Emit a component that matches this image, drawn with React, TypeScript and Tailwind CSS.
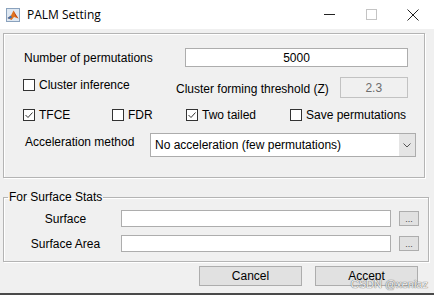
import React from 'react';

function CheckBox({ checked, label, className = '' }: { checked?: boolean; label: string; className?: string }) {
  return (
    <div className={`flex items-center ${className}`}>
      <div className="w-[12px] h-[12px] bg-white border border-[#333333] flex items-center justify-center shrink-0">
        {checked && (
          <svg width="10" height="10" viewBox="0 0 10 10">
            <polyline points="1.5,5 4,7.5 8.5,2.5" fill="none" stroke="#333" strokeWidth="1" />
          </svg>
        )}
      </div>
      <span className="ml-[4px] leading-none">{label}</span>
    </div>
  );
}

function MatlabIcon() {
  return (
    <svg width="14" height="14" viewBox="0 0 14 14">
      <rect x="0.5" y="0.5" width="13" height="13" fill="#dfe8f2" stroke="#8aa2bd" />
      <path d="M1.5 10 L5 7.5 L7.5 2.5 L10 7 L12.5 10.5 L8 9 L5.5 12 Z" fill="#e0731e" />
      <path d="M1.5 10 L5 7.5 L6 9.5 L3 11 Z" fill="#3d6fb0" />
      <path d="M7.5 2.5 L10 7 L12.5 10.5 L9.5 8 Z" fill="#b83a13" />
    </svg>
  );
}

function SmallButton() {
  return (
    <div className="w-[20px] h-[15px] bg-[#e1e1e1] border border-[#adadad] flex items-end justify-center text-[9px] leading-[11px] text-[#444]">
      ...
    </div>
  );
}

export default function App() {
  return (
    <div
      className="w-[434px] h-[295px] bg-[#f0f0f0] relative overflow-hidden text-[12px] text-black"
      style={{ fontFamily: '"Liberation Sans", Arial, sans-serif' }}
    >
      {/* title bar */}
      <div className="h-[29px] bg-white flex items-center relative">
        <div className="ml-[6px]">
          <MatlabIcon />
        </div>
        <span className="ml-[7px] text-[12px]" style={{ fontFamily: '"Open Sans", "Noto Sans", sans-serif' }}>
          PALM Setting
        </span>
        <div className="ml-auto flex items-center h-full">
          <div className="w-[46px] h-full flex items-center justify-center">
            <div className="w-[11px] h-px bg-[#222]" />
          </div>
          <div className="w-[46px] h-full flex items-center justify-center ml-[-4px]">
            <div className="w-[11px] h-[11px] border border-[#c4c4c4]" />
          </div>
          <div className="w-[46px] h-full flex items-center justify-center ml-[-4px] mr-[-2px]">
            <svg width="12" height="12" viewBox="0 0 12 12">
              <path d="M0.5 0.5 L11.5 11.5 M11.5 0.5 L0.5 11.5" stroke="#222" strokeWidth="1" />
            </svg>
          </div>
        </div>
      </div>

      {/* main panel */}
      <div className="mt-[4px] ml-[3px] w-[422px] h-[145px] border border-[#b4b4b4] shadow-[inset_1px_1px_0_#ffffff,1px_1px_0_#ffffff] pt-[14px]">
        <div className="flex items-center h-[19px]">
          <span className="ml-[20px] w-[161px]">Number of permutations</span>
          <div className="w-[223px] h-[19px] bg-white border border-[#adadad] flex items-center justify-center">5000</div>
        </div>

        <div className="flex items-center h-[21px] mt-[10px]">
          <CheckBox label="Cluster inference" className="ml-[19px] w-[153px] mt-[-5px]" />
          <span className="mt-[3px]">Cluster forming threshold (Z)</span>
          <div className="ml-[11px] w-[68px] h-[21px] border border-[#c2c2c2] flex items-center justify-center text-[#6d6d6d]">
            2.3
          </div>
        </div>

        <div className="flex items-center h-[12px] mt-[11px]">
          <CheckBox checked label="TFCE" className="ml-[19px] w-[89px]" />
          <CheckBox label="FDR" className="w-[74px]" />
          <CheckBox checked label="Two tailed" className="w-[104px]" />
          <CheckBox label="Save permutations" />
        </div>

        <div className="flex items-center h-[24px] mt-[12px]">
          <span className="ml-[21px] w-[125px] mt-[-6px]">Acceleration method</span>
          <div className="w-[266px] h-[24px] bg-white border border-[#acacac] flex items-center">
            <span className="ml-[4px] flex-1">No acceleration (few permutations)</span>
            <div className="w-[16px] h-full bg-[#e5e5e5] flex items-center justify-center">
              <svg width="8" height="5" viewBox="0 0 8 5">
                <polyline points="0.5,0.5 4,4 7.5,0.5" fill="none" stroke="#555" strokeWidth="1" />
              </svg>
            </div>
          </div>
        </div>
      </div>

      {/* surface stats */}
      <fieldset className="mt-[12px] ml-[3px] w-[426px] h-[72px] border border-[#b4b4b4] shadow-[inset_1px_1px_0_#ffffff,1px_1px_0_#ffffff] px-0 pb-0">
        <legend className="ml-[4px] px-[1px] leading-[14px]">For Surface Stats</legend>
        <div className="flex items-center h-[17px] mt-[6px]">
          <span className="ml-[6px] w-[111px] text-center">Surface</span>
          <div className="w-[270px] h-[17px] bg-white border border-[#adadad]" />
          <div className="ml-[8px]">
            <SmallButton />
          </div>
        </div>
        <div className="flex items-center h-[17px] mt-[8px]">
          <span className="ml-[6px] w-[111px] text-center">Surface Area</span>
          <div className="w-[270px] h-[17px] bg-white border border-[#adadad]" />
          <div className="ml-[8px]">
            <SmallButton />
          </div>
        </div>
      </fieldset>

      {/* buttons */}
      <div className="flex mt-[4px] ml-[199px]">
        <div className="w-[103px] h-[20px] bg-[#e1e1e1] border border-[#adadad] flex items-center justify-center">
          Cancel
        </div>
        <div className="ml-[13px] w-[103px] h-[20px] bg-[#e1e1e1] border border-[#adadad] flex items-center justify-center">
          Accept
        </div>
      </div>

      <div className="absolute left-0 right-0 bottom-0 h-[2px] bg-[#4a4a4a]" />
      <span
        className="absolute right-[6px] bottom-[5px] text-[11px] leading-none text-[#f4f4f4]"
        style={{ textShadow: '0 0 1px #666, 0 0 1px #666' }}
      >
        CSDN @xeniaz
      </span>
    </div>
  );
}
